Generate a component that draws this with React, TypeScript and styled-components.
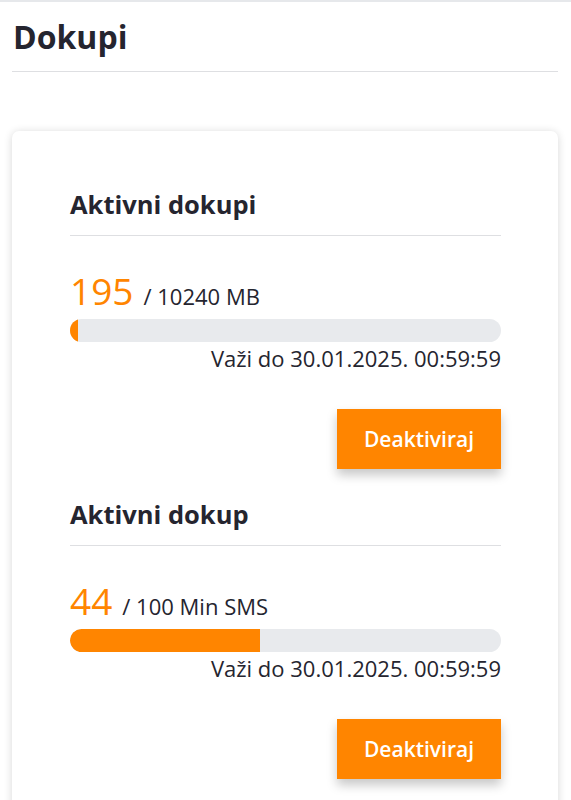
import React from "react";
import styled, { createGlobalStyle } from "styled-components";

const GlobalStyle = createGlobalStyle`
  html, body {
    margin: 0;
    padding: 0;
    background: #ffffff;
  }
  body {
    font-family: "Open Sans", "Noto Sans", Arial, sans-serif;
    color: #25252f;
  }
`;

const Page = styled.div`
  border-top: 2px solid #e6e8eb;
  padding: 0 13px 0 12px;
  height: 798px;
  overflow: hidden;
`;

const PageTitle = styled.h1`
  margin: 15px 0 0 1px;
  font-size: 32px;
  line-height: 40px;
  font-weight: 700;
  color: #25252f;
`;

const Divider = styled.hr<{ $top: number }>`
  margin: ${({ $top }) => `${$top}px 0 0`};
  border: 0;
  border-top: 1.5px solid #dedfe2;
`;

const Card = styled.div`
  margin-top: 59px;
  background: #ffffff;
  border-radius: 7px;
  box-shadow: 0 1px 8px rgba(0, 0, 0, 0.16);
  padding: 57px 57px 40px 58px;
`;

const Section = styled.section`
  display: flex;
  flex-direction: column;
  & + & {
    margin-top: 29px;
  }
`;

const SectionTitle = styled.h2`
  margin: 0;
  font-size: 25.5px;
  line-height: 32px;
  font-weight: 700;
  color: #25252f;
`;

const Amount = styled.div`
  display: flex;
  align-items: baseline;
  gap: 10px;
  margin-top: 33px;
  height: 44px;
`;

const Used = styled.span`
  font-size: 37px;
  line-height: 44px;
  font-weight: 400;
  color: #ff8500;
`;

const Total = styled.span`
  font-size: 22px;
  line-height: 28px;
  color: #25252f;
`;

const Track = styled.div`
  margin-top: 6px;
  height: 23px;
  border-radius: 12px;
  background: #e8eaed;
  overflow: hidden;
`;

const Fill = styled.div`
  height: 100%;
  background: #ff8500;
  border-radius: 12px 0 0 12px;
`;

const Expiry = styled.div`
  margin-top: 2px;
  text-align: right;
  font-size: 22px;
  line-height: 28px;
  color: #25252f;
`;

const Actions = styled.div`
  display: flex;
  justify-content: flex-end;
  margin-top: 37px;
`;

const DeactivateButton = styled.button`
  width: 164px;
  height: 60px;
  border: none;
  border-radius: 0;
  background: #ff8500;
  color: #ffffff;
  font-family: "Open Sans", "Noto Sans", Arial, sans-serif;
  font-size: 21px;
  font-weight: 600;
  box-shadow: 0 6px 10px rgba(0, 0, 0, 0.22);
  cursor: pointer;
`;

type Addon = {
  title: string;
  used: number;
  total: number;
  unit: string;
  validUntil: string;
};

const addons: Addon[] = [
  { title: "Aktivni dokupi", used: 195, total: 10240, unit: "MB", validUntil: "30.01.2025. 00:59:59" },
  { title: "Aktivni dokup", used: 44, total: 100, unit: "Min SMS", validUntil: "30.01.2025. 00:59:59" },
];

const App = () => {
  return (
    <>
      <GlobalStyle />
      <Page>
        <PageTitle>Dokupi</PageTitle>
        <Divider $top={14} />
        <Card>
          {addons.map((a) => (
            <Section key={a.title}>
              <SectionTitle>{a.title}</SectionTitle>
              <Divider $top={15} />
              <Amount>
                <Used>{a.used}</Used>
                <Total>/ {a.total} {a.unit}</Total>
              </Amount>
              <Track>
                <Fill style={{ width: `${(a.used / a.total) * 100}%` }} />
              </Track>
              <Expiry>Važi do {a.validUntil}</Expiry>
              <Actions>
                <DeactivateButton>Deaktiviraj</DeactivateButton>
              </Actions>
            </Section>
          ))}
        </Card>
      </Page>
    </>
  );
};

export default App;
